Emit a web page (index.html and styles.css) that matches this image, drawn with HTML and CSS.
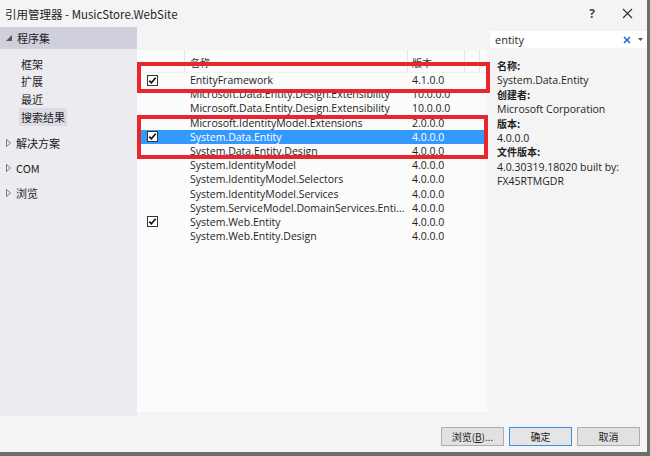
FILE: index.html
```html
<!DOCTYPE html>
<html lang="zh-CN">

<head>
    <meta charset="UTF-8">
    <meta name="viewport" content="width=device-width, initial-scale=1.0">
    <title>引用管理器 - MusicStore.WebSite</title>
    <link rel="stylesheet" href="styles.css">
</head>

<body>
    <div class="window">
        <div class="titlebar">
            <span class="title">引用管理器 - MusicStore.WebSite</span>
            <span class="help">?</span>
            <svg class="close" width="11" height="11" viewBox="0 0 11 11">
                <path d="M1 1 L10 10 M10 1 L1 10" stroke="#333" stroke-width="1.2" fill="none" />
            </svg>
        </div>

        <div class="main">
            <div class="sidebar">
                <div class="group-head">
                    <svg class="arrow" width="6" height="6" viewBox="0 0 6 6">
                        <path d="M6 0 L6 6 L0 6 Z" fill="#555" />
                    </svg>
                    程序集
                </div>
                <div class="sub-items">
                    <div class="sub-item">框架</div>
                    <div class="sub-item">扩展</div>
                    <div class="sub-item">最近</div>
                    <div class="sub-item"><span class="current">搜索结果</span></div>
                </div>
                <div class="groups">
                    <div class="group">
                        <svg class="arrow" width="5" height="8" viewBox="0 0 5 8">
                            <path d="M0.5 0.5 L4.5 4 L0.5 7.5 Z" fill="none" stroke="#777" stroke-width="1" />
                        </svg>
                        解决方案
                    </div>
                    <div class="group">
                        <svg class="arrow" width="5" height="8" viewBox="0 0 5 8">
                            <path d="M0.5 0.5 L4.5 4 L0.5 7.5 Z" fill="none" stroke="#777" stroke-width="1" />
                        </svg>
                        COM
                    </div>
                    <div class="group">
                        <svg class="arrow" width="5" height="8" viewBox="0 0 5 8">
                            <path d="M0.5 0.5 L4.5 4 L0.5 7.5 Z" fill="none" stroke="#777" stroke-width="1" />
                        </svg>
                        浏览
                    </div>
                </div>
            </div>

            <div class="center">
                <div class="list">
                    <div class="list-head">
                        <div class="col-check"></div>
                        <div class="col-name">名称</div>
                        <div class="col-version">版本</div>
                        <div class="col-rest"></div>
                    </div>
                    <div id="rows"></div>
                </div>
            </div>

            <div class="details">
                <div class="search">
                    <span class="search-text">entity</span>
                    <svg class="search-clear" width="8" height="8" viewBox="0 0 8 8">
                        <path d="M1 1 L7 7 M7 1 L1 7" stroke="#1e6fd0" stroke-width="1.6" fill="none" />
                    </svg>
                    <svg class="search-drop" width="5" height="3" viewBox="0 0 5 3">
                        <path d="M0 0 L5 0 L2.5 3 Z" fill="#555" />
                    </svg>
                </div>
                <div class="info">
                    <div class="label">名称:</div>
                    <div>System.Data.Entity</div>
                    <div class="label">创建者:</div>
                    <div>Microsoft Corporation</div>
                    <div class="label">版本:</div>
                    <div>4.0.0.0</div>
                    <div class="label">文件版本:</div>
                    <div>4.0.30319.18020 built by:</div>
                    <div>FX45RTMGDR</div>
                </div>
            </div>
        </div>

        <div class="footer">
            <button class="btn">浏览(<u>B</u>)...</button>
            <button class="btn btn-default">确定</button>
            <button class="btn">取消</button>
        </div>

        <div class="mark mark-one"></div>
        <div class="mark mark-two"></div>
    </div>

    <script>
        const refs = [
            { name: 'EntityFramework', version: '4.1.0.0', checked: true },
            { name: 'Microsoft.Data.Entity.Design.Extensibility', version: '10.0.0.0' },
            { name: 'Microsoft.Data.Entity.Design.Extensibility', version: '10.0.0.0' },
            { name: 'Microsoft.IdentityModel.Extensions', version: '2.0.0.0' },
            { name: 'System.Data.Entity', version: '4.0.0.0', checked: true, selected: true },
            { name: 'System.Data.Entity.Design', version: '4.0.0.0' },
            { name: 'System.IdentityModel', version: '4.0.0.0' },
            { name: 'System.IdentityModel.Selectors', version: '4.0.0.0' },
            { name: 'System.IdentityModel.Services', version: '4.0.0.0' },
            { name: 'System.ServiceModel.DomainServices.Enti...', version: '4.0.0.0' },
            { name: 'System.Web.Entity', version: '4.0.0.0', checked: true },
            { name: 'System.Web.Entity.Design', version: '4.0.0.0' }
        ];

        const checkSvg = '<svg width="11" height="11" viewBox="0 0 11 11">' +
            '<rect x="0.5" y="0.5" width="10" height="10" fill="#fff" stroke="#333" />' +
            '<path d="M2.3 5.6 L4.4 7.8 L8.6 2.8" fill="none" stroke="#111" stroke-width="1.7" />' +
            '</svg>';

        const rows = document.getElementById('rows');
        refs.forEach(ref => {
            const row = document.createElement('div');
            row.className = 'row' + (ref.selected ? ' selected' : '');
            row.innerHTML =
                `<div class="col-check">${ref.checked ? checkSvg : ''}</div>` +
                `<div class="col-name">${ref.name}</div>` +
                `<div class="col-version">${ref.version}</div>`;
            rows.appendChild(row);
        });
    </script>
</body>

</html>
```

FILE: styles.css
```css
body {
    margin: 0;
    padding: 0;
    font-family: "Open Sans", "Noto Sans CJK SC", sans-serif;
    color: #1e1e1e;
}

.window {
    position: relative;
    width: 650px;
    height: 456px;
    box-sizing: border-box;
    background-color: #f4f4f5;
    border-right: 3px solid #6d6d6d;
    border-bottom: 4px solid #6d6d6d;
    display: flex;
    flex-direction: column;
    overflow: hidden;
}

.titlebar {
    height: 27px;
    display: flex;
    align-items: center;
    padding-left: 5px;
    font-size: 11.5px;
}

.title {
    flex: 1;
    font-family: "Noto Sans CJK SC", sans-serif;
}

.help {
    font-size: 12px;
    font-weight: bold;
    color: #444;
    margin-right: 27px;
}

.close {
    margin-right: 14px;
}

.main {
    height: 389px;
    display: flex;
}

/* left tree */
.sidebar {
    width: 137px;
    background-color: #ebebf0;
    font-family: "Noto Sans CJK SC", sans-serif;
    font-size: 11px;
}

.group-head {
    height: 22px;
    display: flex;
    align-items: center;
    background-color: #cfd0db;
}

.arrow {
    margin: 0 5px 0 6px;
}

.sub-items {
    padding-top: 6px;
}

.sub-item {
    height: 17.6px;
    display: flex;
    align-items: center;
    padding-left: 21px;
}

.current {
    background-color: #dcdce6;
    padding: 1px 2px;
    margin-left: -2px;
}

.groups {
    padding-top: 5px;
}

.group {
    height: 25px;
    display: flex;
    align-items: center;
}

/* reference list */
.center {
    flex: 1;
    display: flex;
    flex-direction: column;
    padding-top: 23px;
    padding-right: 3px;
    padding-bottom: 4px;
}

.list {
    flex: 1;
    background-color: #fbfbfb;
    font-size: 10.5px;
}

.list-head {
    height: 22px;
    display: flex;
    border-bottom: 1px solid #f0f0f0;
    font-family: "Noto Sans CJK SC", sans-serif;
    font-size: 10px;
    color: #333;
}

.list-head div {
    border-right: 1px solid #e3e3e3;
    padding-top: 5px;
}

.list-head .col-rest {
    width: 14px;
}

.col-check {
    width: 48px;
    padding-left: 10px;
    box-sizing: border-box;
    display: flex;
    align-items: center;
}

.col-name {
    width: 223px;
    padding-left: 5px;
    box-sizing: border-box;
    white-space: nowrap;
    overflow: hidden;
}

.col-version {
    width: 57px;
    padding-left: 4px;
    box-sizing: border-box;
}

.row {
    height: 14.2px;
    line-height: 14.2px;
    display: flex;
    margin-left: 2px;
}

.row .col-check {
    width: 46px;
    padding-left: 8px;
}

.row .col-version {
    width: 75px;
}

.row.selected {
    background-color: #3399ff;
    color: #fff;
}

/* details pane */
.details {
    width: 157px;
    display: flex;
    flex-direction: column;
}

.search {
    height: 17px;
    margin-top: 4px;
    background-color: #fff;
    display: flex;
    align-items: center;
    padding-left: 5px;
    font-size: 11px;
}

.search-text {
    flex: 1;
}

.search-clear {
    margin-right: 7px;
}

.search-drop {
    margin-right: 4px;
}

.info {
    padding: 11px 0 0 7px;
    font-size: 10.5px;
    line-height: 14.4px;
    white-space: nowrap;
}

.label {
    font-family: "Noto Sans CJK SC", sans-serif;
    font-weight: bold;
    font-size: 10px;
}

/* dialog buttons */
.footer {
    flex: 1;
    display: flex;
    justify-content: flex-end;
    align-items: center;
    gap: 5px;
    padding-right: 7px;
    padding-top: 4px;
}

.btn {
    width: 63px;
    height: 19px;
    padding: 0;
    background-color: #e1e1e1;
    border: 1px solid #adadad;
    font-family: "Noto Sans CJK SC", sans-serif;
    font-size: 10px;
    color: #1e1e1e;
}

.btn-default {
    border-color: #3c8ee0;
    background-color: #e5e5e5;
}

/* red annotation boxes drawn on the screenshot */
.mark {
    position: absolute;
    border: 4px solid #e8262d;
    box-sizing: border-box;
}

.mark-one {
    left: 137px;
    top: 62px;
    width: 353px;
    height: 31px;
}

.mark-two {
    left: 137px;
    top: 115px;
    width: 351px;
    height: 44px;
}
```
